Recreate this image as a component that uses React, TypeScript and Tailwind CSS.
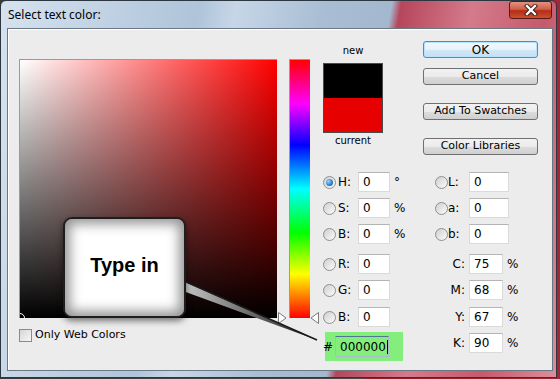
import React from "react";

function Radio({ on }: { on?: boolean }) {
  return (
    <span className="grid h-[13px] w-[13px] shrink-0 place-items-center rounded-full border border-[#8e8f8f] bg-[linear-gradient(135deg,#cfcfcf,#fbfbfb)]">
      {on && <span className="h-[7px] w-[7px] rounded-full bg-[radial-gradient(circle_at_35%_35%,#9bd6ff,#1a6bbd_70%)]" />}
    </span>
  );
}

function Box({ value, w }: { value: string; w: string }) {
  return (
    <span className={`flex h-[20px] shrink-0 items-center border border-[#dadada] border-t-[#b5b5b5] bg-white pl-[4px] text-[12px] ${w}`}>
      {value}
    </span>
  );
}

function Btn({ label, main }: { label: string; main?: boolean }) {
  return (
    <div
      className={
        main
          ? "flex h-[17px] w-[115px] items-center justify-center rounded-[3px] border border-[#3a94d0] bg-[linear-gradient(to_bottom,#f3f9fd_0%,#e6f2fa_50%,#d2e7f5_51%,#c6e0f2_100%)] text-[12px] shadow-[inset_0_0_0_1px_#b5e3ff]"
          : "flex h-[17px] w-[115px] items-center justify-center rounded-[3px] border border-[#707070] bg-[linear-gradient(to_bottom,#f2f2f2_0%,#ebebeb_50%,#dddddd_51%,#cfcfcf_100%)] text-[11px]"
      }
    >
      {label}
    </div>
  );
}

function LeftField({ label, value, unit, on }: { label: string; value: string; unit?: string; on?: boolean }) {
  return (
    <div className="flex w-[112px] items-center">
      <Radio on={on} />
      <span className="ml-[2px] w-[20px] text-[12px]">{label}</span>
      <Box value={value} w="w-[32px]" />
      {unit && <span className="ml-[4px] text-[12px]">{unit}</span>}
    </div>
  );
}

function LabField({ label, value }: { label: string; value: string }) {
  return (
    <div className="flex items-center">
      <Radio />
      <span className="w-[21px] text-[12px]">{label}</span>
      <Box value={value} w="w-[40px]" />
    </div>
  );
}

function CmykField({ label, value }: { label: string; value: string }) {
  return (
    <div className="flex items-center">
      <span className="w-[34px] pr-[4px] text-right text-[12px]">{label}</span>
      <Box value={value} w="w-[34px]" />
      <span className="ml-[4px] text-[12px]">%</span>
    </div>
  );
}

export default function App() {
  return (
    <div className="relative h-[379px] w-[560px] overflow-hidden bg-[linear-gradient(to_right,#3b3b3b_0%,#4a4a4a_64%,#8e1d2b_66%,#a02838_100%)] font-['DejaVu_Sans',sans-serif] text-black">
      <div className="flex h-[378px] w-[557px] flex-col rounded-t-[6px] border border-[#2c3640] bg-[linear-gradient(100deg,#d6e2ee_0%,#bfd1e3_18%,#afc4d9_32%,#c6d6e6_38%,#a9bed4_52%,#a3b7ce_63%,#b6465b_64.5%,#d47b8b_76%,#c55a6b_88%,#dc8e9a_100%)]">
        <div className="flex h-[27px] shrink-0 items-center justify-between pl-[7px]">
          <span className="font-['Noto_Sans',sans-serif] text-[12px] text-black">Select text color:</span>
          <div className="mr-[4px] grid h-[18px] w-[43px] self-start place-items-center rounded-[3px] border border-[#5a1911] bg-[linear-gradient(to_bottom,#e4927f_0%,#cf5f48_45%,#b52d15_55%,#cc4f30_100%)]">
            <svg width="14" height="12" viewBox="0 0 14 12">
              <path d="M3 2 L11 10 M11 2 L3 10" stroke="#3a1410" strokeWidth="4.2" strokeLinecap="square" />
              <path d="M3 2 L11 10 M11 2 L3 10" stroke="#ffffff" strokeWidth="2.4" strokeLinecap="square" />
            </svg>
          </div>
        </div>

        <div className="ml-[6px] flex h-[343px] w-[546px] border border-[#6b7884] bg-[#ececec] shadow-[inset_1px_1px_0_#ffffff]">
          {/* picker field */}
          <div className="ml-[11px] mt-[30px] flex flex-col">
            <div className="relative h-[259px] w-[258px] overflow-hidden border-l border-t border-[#9a9a9a] bg-[linear-gradient(to_right,#ffffff,#ff0000)]">
              <div className="absolute inset-0 bg-[linear-gradient(to_bottom,rgba(0,0,0,0),#000000)]" />
              <div className="absolute -bottom-[5px] -left-[5px] h-[10px] w-[10px] rounded-full border border-white" />
            </div>
            <div className="mt-[9px] flex items-center">
              <span className="h-[13px] w-[13px] border border-[#8a8a8a] bg-[linear-gradient(135deg,#d6d6d6,#f7f7f7)]" />
              <span className="ml-[3px] text-[11px]">Only Web Colors</span>
            </div>
          </div>

          {/* hue slider */}
          <div className="relative ml-[12px] mt-[30px] h-[259px] w-[21px] border-l border-t border-[#9a9a9a] bg-[linear-gradient(to_bottom,#ff0000,#ff00ff_17%,#0000ff_33%,#00ffff_50%,#00ff00_67%,#ffff00_83%,#ff0000)]">
            <svg className="absolute -bottom-[6px] -left-[12px]" width="9" height="12" viewBox="0 0 9 12">
              <path d="M0.5 0.5 L8 6 L0.5 11.5 Z" fill="#ffffff" stroke="#7a7a7a" />
            </svg>
            <svg className="absolute -bottom-[6px] -right-[9px]" width="9" height="12" viewBox="0 0 9 12">
              <path d="M8.5 0.5 L1 6 L8.5 11.5 Z" fill="#ffffff" stroke="#7a7a7a" />
            </svg>
          </div>

          {/* right side */}
          <div className="mt-[12px] flex flex-col">
            <div className="flex">
              <div className="ml-[13px] mt-[4px] flex w-[60px] flex-col items-center">
                <span className="h-[12px] text-[10px] leading-[12px]">new</span>
                <div className="mt-[6px] flex h-[70px] w-[60px] flex-col border border-[#4a4a4a]">
                  <div className="flex-1 bg-black" />
                  <div className="flex-1 bg-[#e60000]" />
                </div>
                <span className="mt-[2px] text-[10px] leading-[12px]">current</span>
              </div>
              <div className="ml-[40px] flex flex-col">
                <Btn label="OK" main />
                <div className="mt-[10px]"><Btn label="Cancel" /></div>
                <div className="mt-[18px]"><Btn label="Add To Swatches" /></div>
                <div className="mt-[18px]"><Btn label="Color Libraries" /></div>
              </div>
            </div>

            <div className="ml-[13px] mt-[17px] flex flex-col">
              <div className="flex"><LeftField label="H:" value="0" unit="°" on /><LabField label="L:" value="0" /></div>
              <div className="mt-[6px] flex"><LeftField label="S:" value="0" unit="%" /><LabField label="a:" value="0" /></div>
              <div className="mt-[6px] flex"><LeftField label="B:" value="0" unit="%" /><LabField label="b:" value="0" /></div>
              <div className="mt-[10px] flex"><LeftField label="R:" value="0" /><CmykField label="C:" value="75" /></div>
              <div className="mt-[6px] flex"><LeftField label="G:" value="0" /><CmykField label="M:" value="68" /></div>
              <div className="mt-[7px] flex"><LeftField label="B:" value="0" /><CmykField label="Y:" value="67" /></div>
              <div className="mt-[5px] flex items-start">
                <div className="flex w-[112px]">
                  <div className="ml-[2px] flex h-[29px] w-[78px] items-center bg-[#84ee7c]">
                    <span className="-ml-[2px] text-[12px]">#</span>
                    <span className="ml-[2px] flex h-[21px] w-[54px] items-center border border-[#a9bccb] border-t-[#4f7595] bg-[#84ee7c] pl-[4px] text-[12px]">
                      000000<span className="ml-[1px] h-[14px] w-px bg-black" />
                    </span>
                  </div>
                </div>
                <div className="mt-[1px]"><CmykField label="K:" value="90" /></div>
              </div>
            </div>
          </div>
        </div>
      </div>

      {/* callout */}
      <svg className="absolute left-0 top-0" width="560" height="379" viewBox="0 0 560 379">
        <defs>
          <linearGradient id="wedge" x1="0" y1="0" x2="1" y2="0">
            <stop offset="0" stopColor="#c8c8c8" />
            <stop offset="0.5" stopColor="#6a6a6a" />
            <stop offset="1" stopColor="#1c1c1c" />
          </linearGradient>
        </defs>
        <path d="M183 281 L183 291 L317 340 Z" fill="url(#wedge)" />
        <path d="M184 281 L317 340" stroke="#1a1a1a" strokeWidth="1.6" />
      </svg>
      <div className="absolute left-[63px] top-[217px] flex h-[101px] w-[123px] items-center justify-center rounded-[9px] border-2 border-[#1e1e1e] bg-white pb-[6px] shadow-[inset_0_0_12px_5px_rgba(0,0,0,0.42),0_3px_6px_rgba(0,0,0,0.5)]">
        <span className="font-['Liberation_Sans',sans-serif] text-[20px] font-bold">Type in</span>
      </div>
    </div>
  );
}
